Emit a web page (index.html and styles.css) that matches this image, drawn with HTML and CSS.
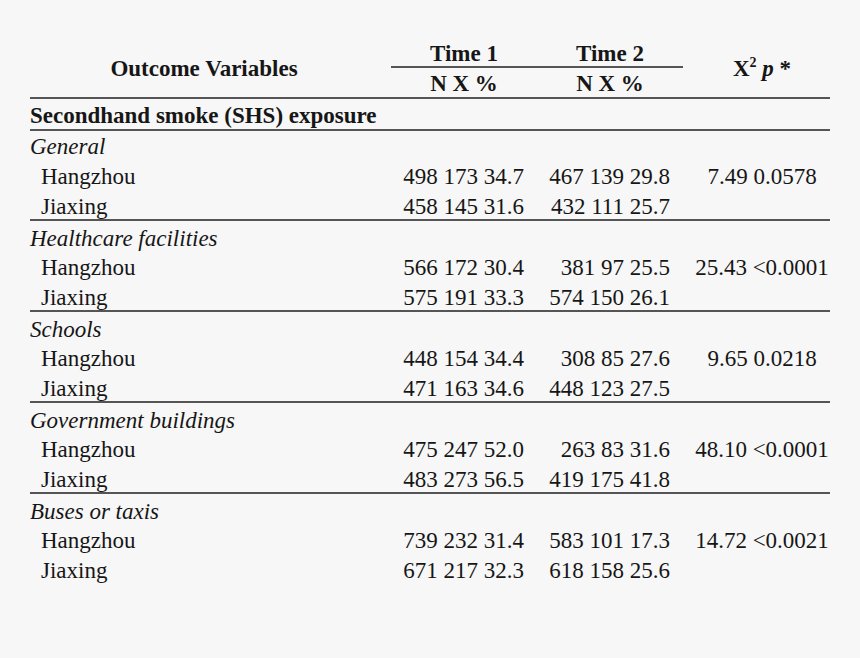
FILE: index.html
```html
<!DOCTYPE html>
<html lang="en">
<head>
<meta charset="utf-8">
<title>SHS exposure table</title>
<link rel="stylesheet" href="styles.css">
</head>
<body>
<div class="table">
  <div class="head">
    <div class="outcome">Outcome Variables</div>
    <div class="times">
      <div class="time">Time 1</div>
      <div class="time">Time 2</div>
    </div>
    <div class="nx nx1">N X %</div>
    <div class="nx nx2">N X %</div>
    <div class="chi">X<sup class="sq">2</sup> <i class="pv">p</i> *</div>
  </div>
  <div class="section">Secondhand smoke (SHS) exposure</div>

  <div class="group first">
    <div class="row cat"><span class="label">General</span></div>
    <div class="row"><span class="label sub">Hangzhou</span><span class="t1">498 173 34.7</span><span class="t2">467 139 29.8</span><span class="chi-v">7.49 0.0578</span></div>
    <div class="row last"><span class="label sub">Jiaxing</span><span class="t1">458 145 31.6</span><span class="t2">432 111 25.7</span><span class="chi-v"></span></div>
  </div>

  <div class="group">
    <div class="row cat"><span class="label">Healthcare facilities</span></div>
    <div class="row"><span class="label sub">Hangzhou</span><span class="t1">566 172 30.4</span><span class="t2">381 97 25.5</span><span class="chi-v">25.43 &lt;0.0001</span></div>
    <div class="row last"><span class="label sub">Jiaxing</span><span class="t1">575 191 33.3</span><span class="t2">574 150 26.1</span><span class="chi-v"></span></div>
  </div>

  <div class="group">
    <div class="row cat"><span class="label">Schools</span></div>
    <div class="row"><span class="label sub">Hangzhou</span><span class="t1">448 154 34.4</span><span class="t2">308 85 27.6</span><span class="chi-v">9.65 0.0218</span></div>
    <div class="row last"><span class="label sub">Jiaxing</span><span class="t1">471 163 34.6</span><span class="t2">448 123 27.5</span><span class="chi-v"></span></div>
  </div>

  <div class="group">
    <div class="row cat"><span class="label">Government buildings</span></div>
    <div class="row"><span class="label sub">Hangzhou</span><span class="t1">475 247 52.0</span><span class="t2">263 83 31.6</span><span class="chi-v">48.10 &lt;0.0001</span></div>
    <div class="row last"><span class="label sub">Jiaxing</span><span class="t1">483 273 56.5</span><span class="t2">419 175 41.8</span><span class="chi-v"></span></div>
  </div>

  <div class="group final">
    <div class="row cat"><span class="label">Buses or taxis</span></div>
    <div class="row"><span class="label sub">Hangzhou</span><span class="t1">739 232 31.4</span><span class="t2">583 101 17.3</span><span class="chi-v">14.72 &lt;0.0021</span></div>
    <div class="row last"><span class="label sub">Jiaxing</span><span class="t1">671 217 32.3</span><span class="t2">618 158 25.6</span><span class="chi-v"></span></div>
  </div>
</div>
</body>
</html>
```

FILE: styles.css
```css
html, body {
  margin: 0;
  padding: 0;
  background: #f7f7f7;
}

body {
  font-family: "Liberation Serif", "Times New Roman", serif;
  font-size: 23px;
  color: #161616;
}

.table {
  width: 800px;
  margin: 38px 0 0 30px;
}

/* ---------- header ---------- */
.head {
  display: grid;
  grid-template-columns: 361px 146px 146px 147px;
  grid-template-rows: 30px 29px;
  border-bottom: 2px solid #555;
  font-weight: bold;
}

.outcome {
  grid-column: 1;
  grid-row: 1 / 3;
  align-self: center;
  text-align: center;
  line-height: 26px;
  padding-right: 13px;
  margin-top: 2px;
}

.times {
  grid-column: 2 / 4;
  grid-row: 1;
  display: grid;
  grid-template-columns: 146px 146px;
  border-bottom: 2px solid #555;
}

.time {
  text-align: center;
  padding-top: 3px;
  line-height: 25px;
}

.nx {
  grid-row: 2;
  text-align: center;
  padding-top: 3px;
  line-height: 26px;
}

.nx1 { grid-column: 2; }
.nx2 { grid-column: 3; }

.chi {
  grid-column: 4;
  grid-row: 1 / 3;
  align-self: center;
  text-align: center;
  padding-left: 11px;
  line-height: 26px;
  margin-top: 3px;
}

.sq {
  font-size: 14px;
  vertical-align: 9px;
  line-height: 0;
}

.pv {
  font-style: italic;
}

/* ---------- section title ---------- */
.section {
  font-weight: bold;
  height: 29px;
  padding-top: 1px;
  line-height: 31px;
  border-bottom: 2px solid #555;
}

/* ---------- groups ---------- */
.group {
  border-bottom: 2px solid #555;
}

.group.final {
  border-bottom: none;
}

.row {
  display: grid;
  grid-template-columns: 361px 146px 146px 147px;
  height: 30px;
  line-height: 32px;
  white-space: nowrap;
}

.row.cat {
  height: 31px;
  box-sizing: border-box;
  padding-top: 3px;
  line-height: 29px;
}

.row.last {
  height: 28px;
  line-height: 32px;
}

.group.first .row.cat {
  height: 30px;
  padding-top: 0;
  line-height: 31px;
}

.label {
  grid-column: 1;
}

.cat .label {
  font-style: italic;
}

.label.sub {
  padding-left: 11px;
}

.t1, .t2 {
  text-align: right;
  padding-right: 13px;
}

.chi-v {
  text-align: center;
  padding-left: 11px;
}
```
